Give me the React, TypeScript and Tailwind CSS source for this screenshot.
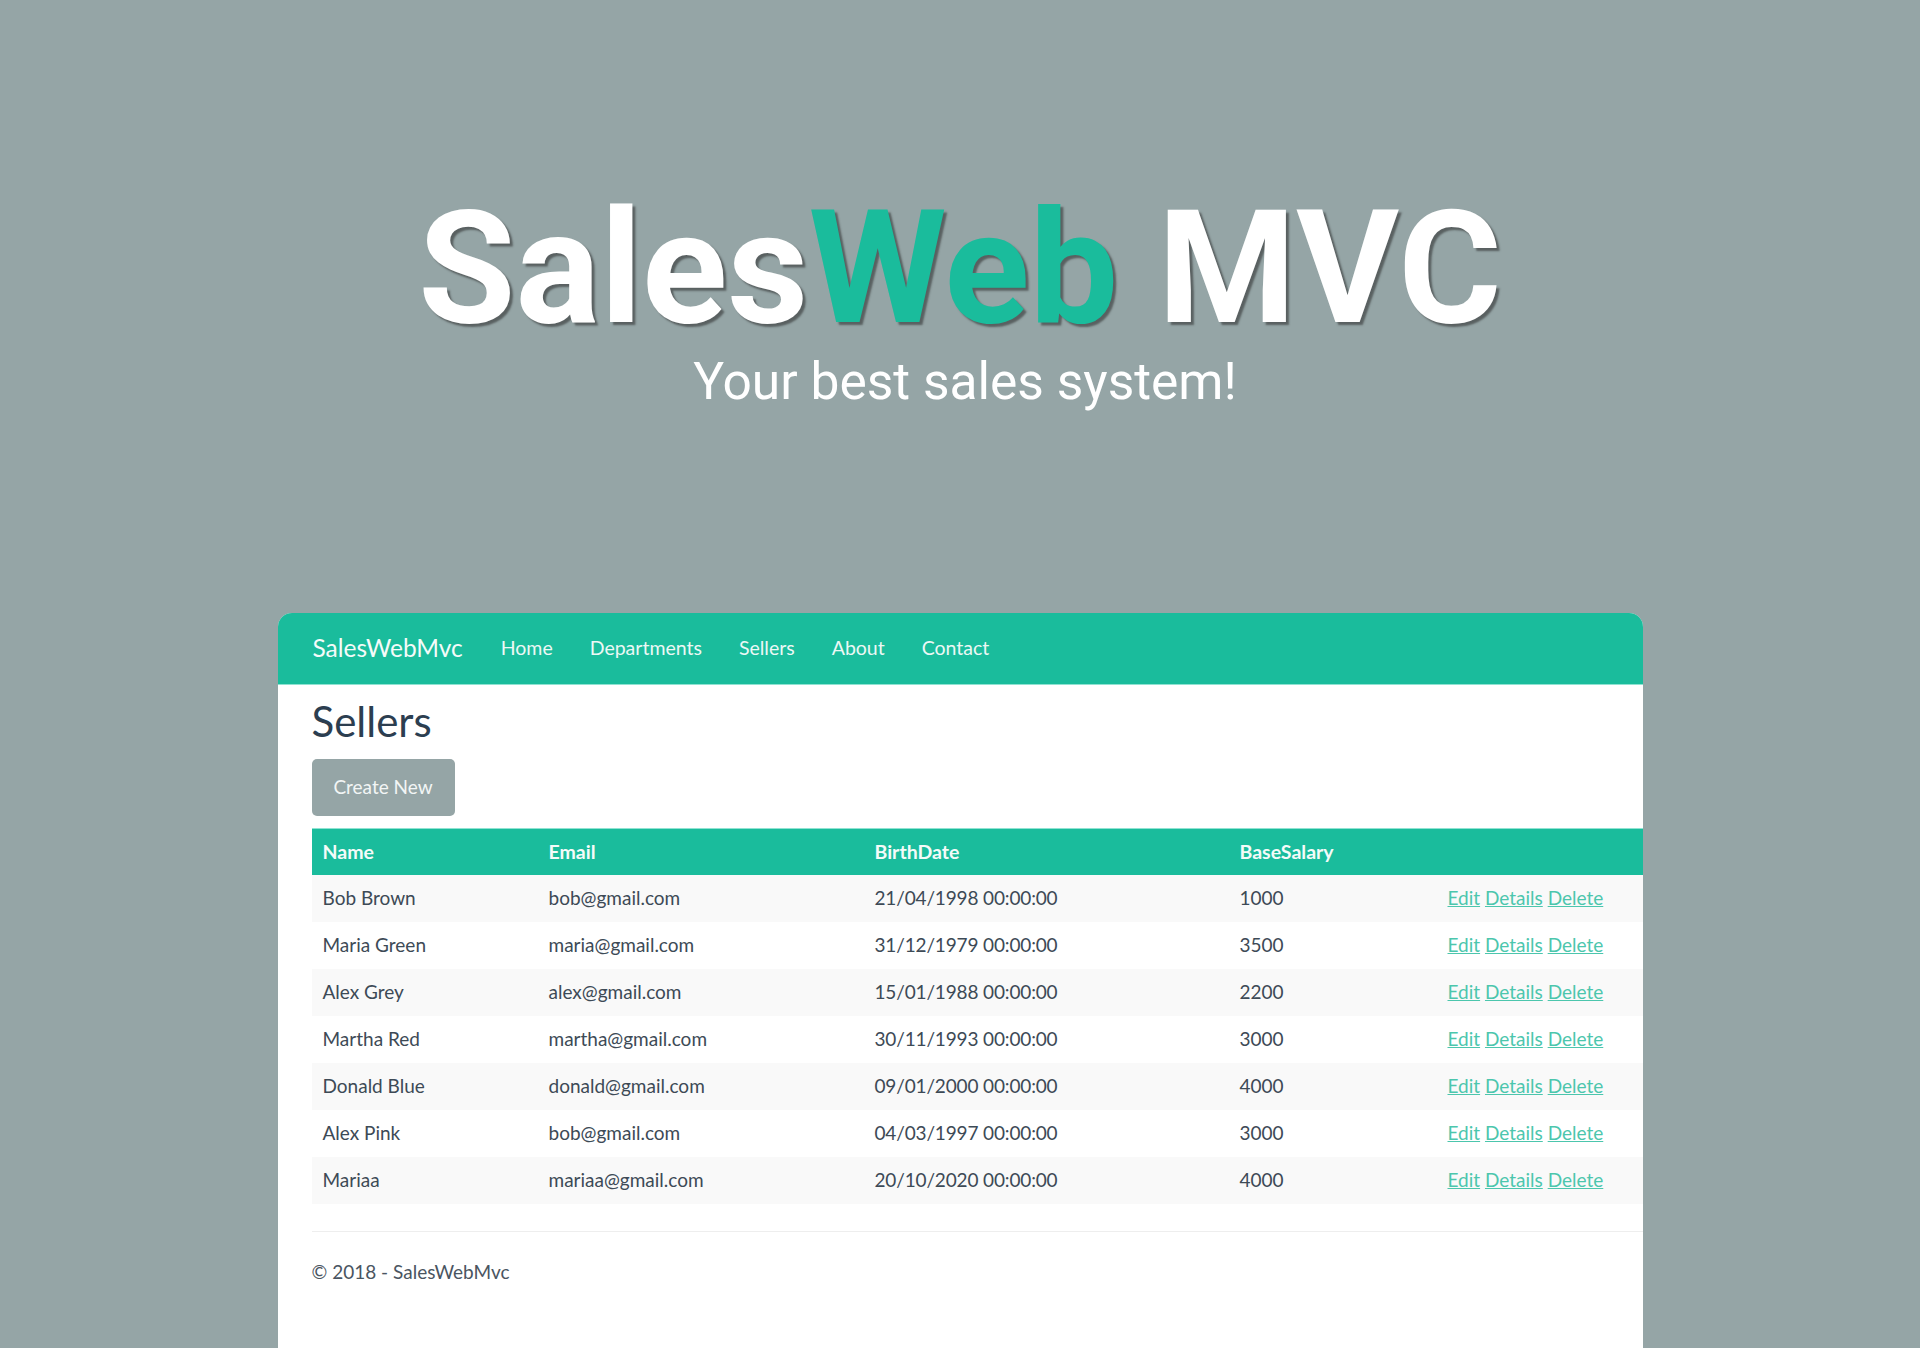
import React from "react";

const rows = [
  ["Bob Brown", "bob@gmail.com", "21/04/1998 00:00:00", "1000"],
  ["Maria Green", "maria@gmail.com", "31/12/1979 00:00:00", "3500"],
  ["Alex Grey", "alex@gmail.com", "15/01/1988 00:00:00", "2200"],
  ["Martha Red", "martha@gmail.com", "30/11/1993 00:00:00", "3000"],
  ["Donald Blue", "donald@gmail.com", "09/01/2000 00:00:00", "4000"],
  ["Alex Pink", "bob@gmail.com", "04/03/1997 00:00:00", "3000"],
  ["Mariaa", "mariaa@gmail.com", "20/10/2020 00:00:00", "4000"],
];

const gridCols = "grid grid-cols-[226px_326px_365px_208px_1fr]";

export default function App() {
  return (
    <div className="h-[1348px] w-full overflow-hidden bg-[#95a5a6]">
      <div className="pt-[189px] text-center font-['Roboto',sans-serif]">
        <h1 className="text-[158px] font-bold leading-none text-white [text-shadow:3px_3px_2px_rgba(40,40,40,0.55)]">
          Sales<span className="text-[#1abc9c]">Web</span> MVC
        </h1>
        <p className="mt-[9px] pl-[10px] text-[51.5px] font-normal leading-none text-white">
          Your best sales system!
        </p>
      </div>

      <div className="mx-auto mt-[205px] h-[900px] w-[1365px] overflow-hidden rounded-[14px] bg-white font-['Lato',sans-serif]">
        <nav className="flex h-[72px] items-center border-b border-[#8fe3d2] bg-[#1abc9c] pl-[35px]">
          <span className="text-[24.5px] leading-none text-[#f4fbf9]">SalesWebMvc</span>
          <div className="ml-[38px] flex items-center gap-[37px] text-[19.5px] leading-none text-[#ecf8f5]">
            <span>Home</span>
            <span>Departments</span>
            <span>Sellers</span>
            <span>About</span>
            <span>Contact</span>
          </div>
        </nav>

        <div className="pl-[34px]">
          <h2 className="mt-[15px] text-[42px] leading-none text-[#2c3e50]">Sellers</h2>
          <button className="mt-[17px] flex h-[57px] w-[143px] items-center justify-center rounded-[5px] bg-[#95a5a6] text-[19px] text-[#f2f5f5]">
            Create New
          </button>

          <div className="mt-[12px] border-t border-[#8fe3d2]">
            <div className={`${gridCols} h-[46px] items-center bg-[#1abc9c] text-[19.5px] font-bold text-[#f4fbf9]`}>
              <div className="pl-[11px]">Name</div>
              <div className="pl-[11px]">Email</div>
              <div className="pl-[11px]">BirthDate</div>
              <div className="pl-[11px]">BaseSalary</div>
              <div />
            </div>
            {rows.map((r, i) => (
              <div
                key={i}
                className={`${gridCols} h-[47px] items-center text-[19px] text-[#3d4a56] ${
                  i % 2 === 0 ? "bg-[#f9f9f9]" : "bg-white"
                }`}
              >
                <div className="pl-[11px]">{r[0]}</div>
                <div className="pl-[11px]">{r[1]}</div>
                <div className="pl-[11px] tracking-[-0.15px]">{r[2]}</div>
                <div className="pl-[11px]">{r[3]}</div>
                <div className="pl-[11px] text-[#4cc6ad]">
                  <a className="underline">Edit</a> <a className="underline">Details</a>{" "}
                  <a className="underline">Delete</a>
                </div>
              </div>
            ))}
          </div>

          <hr className="mt-[27px] border-t border-[#eeeeee]" />
          <footer className="mt-[30px] text-[19px] leading-none text-[#4a5561]">© 2018 - SalesWebMvc</footer>
        </div>
      </div>
    </div>
  );
}
